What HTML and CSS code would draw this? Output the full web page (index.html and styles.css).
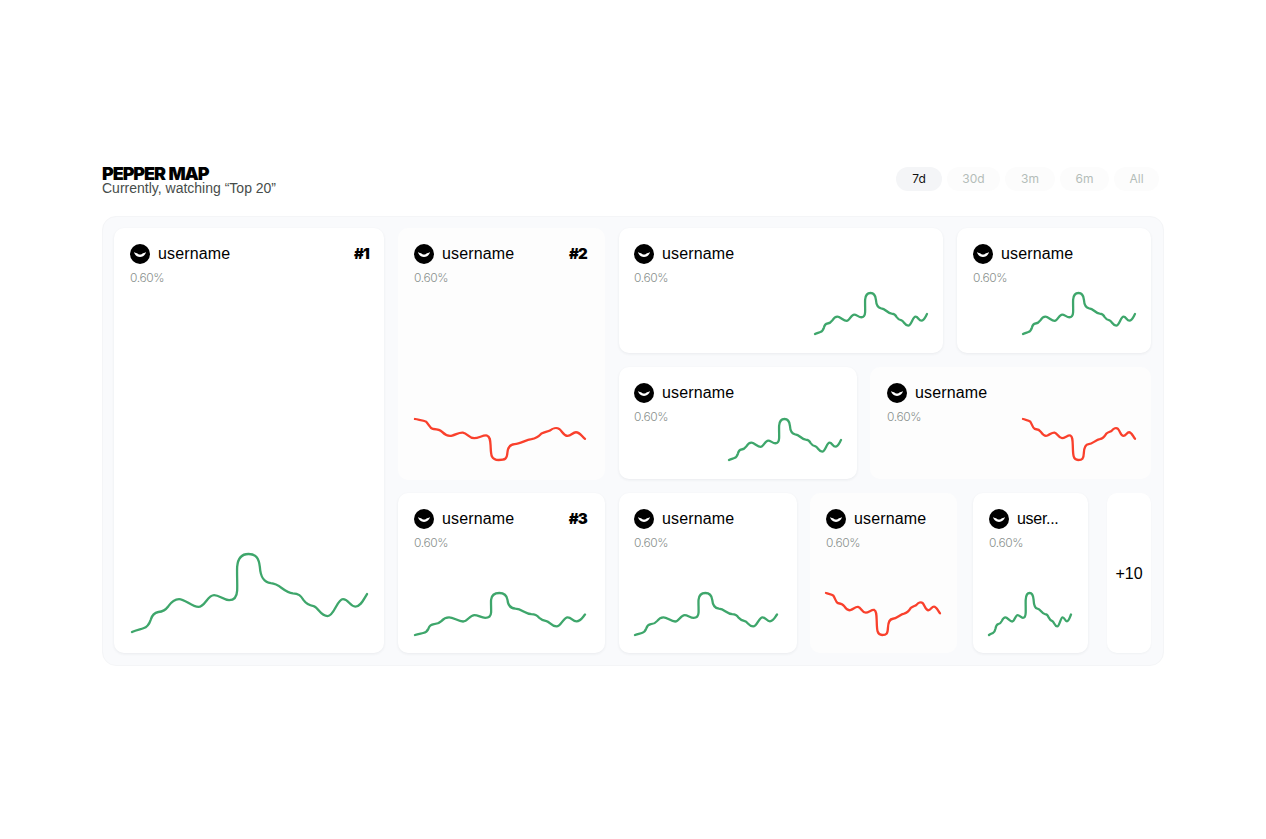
FILE: index.html
```html
<!DOCTYPE html>
<html lang="en">
<head>
  <meta charset="UTF-8">
  <meta name="viewport" content="width=device-width, initial-scale=1.0">
  <title>Pepper Map</title>
  <link rel="stylesheet" href="styles.css">
</head>
<body>
  <!-- shared shapes -->
  <svg class="defs" aria-hidden="true">
    <symbol id="avatar" viewBox="0 0 20 20">
      <circle cx="10" cy="10" r="10" fill="#000"/>
      <path d="M4 8C4.6 11 7 12.9 10 12.9C13 12.9 15.4 11 16 8C14.4 9 13.2 9.4 12.4 9.5C11.8 10.8 8.2 10.8 7.6 9.5C6.8 9.4 5.6 9 4 8Z" fill="#fff"/>
    </symbol>
    <symbol id="line-up" viewBox="66 72 704 230" preserveAspectRatio="none">
      <path class="line line-green" d="M66 302C78 296 92 294 100 291C112 287 118 278 122 266C126 252 133 245 145 243C158 242 166 238 175 226C184 213 195 205 207 205C225 205 245 228 265 228C285 228 292 193 312 193C328 193 340 208 357 208C372 208 380 200 381 180C382 160 380 130 381 110C383 85 395 72 415 72C438 72 446 85 449 110C451 140 460 155 482 158C510 160 520 185 548 188C565 188 572 195 580 208C590 222 600 224 610 226C625 230 630 255 652 255C672 255 680 205 698 205C715 205 718 227 735 227C752 227 760 205 770 190"/>
    </symbol>
    <symbol id="line-down" viewBox="47 57 508 124" preserveAspectRatio="none">
      <path class="line line-red" d="M47 57C60 60 72 60 80 65C88 72 90 84 100 87C112 88 120 88 128 96C138 106 148 110 158 107C170 104 178 97 190 98C204 100 208 115 224 115C238 115 250 105 262 107C272 110 272 122 273 140C274 165 274 181 297 181C316 181 322 178 323 160C324 142 330 134 345 133C362 132 378 120 395 118C408 116 415 112 425 101C435 96 445 95 450 92C458 85 470 82 478 87C488 94 490 108 503 108C514 108 518 97 528 97C540 97 546 110 555 117"/>
    </symbol>
  </svg>

  <main class="page">
    <header class="top">
      <div>
        <h1 class="title">PEPPER MAP</h1>
        <p class="subtitle">Currently, watching “Top 20”</p>
      </div>
      <nav class="tabs">
        <span class="tab tab-active">7d</span>
        <span class="tab tab-30">30d</span>
        <span class="tab tab-3m">3m</span>
        <span class="tab tab-6m">6m</span>
        <span class="tab tab-all">All</span>
      </nav>
    </header>

    <section class="panel">
      <article class="card card-first">
        <div class="card-head">
          <svg class="avatar"><use href="#avatar"/></svg>
          <span class="name">username</span>
          <span class="rank">#1</span>
        </div>
        <p class="pct">0.60%</p>
        <svg class="chart chart-xl"><use href="#line-up" width="100%" height="100%"/></svg>
      </article>

      <div class="main">
        <div class="upper">
          <article class="card card-faded card-second">
            <div class="card-head">
              <svg class="avatar"><use href="#avatar"/></svg>
              <span class="name">username</span>
              <span class="rank rank-inset">#2</span>
            </div>
            <p class="pct">0.60%</p>
            <svg class="chart chart-wide chart-high"><use href="#line-down" width="100%" height="100%"/></svg>
          </article>

          <div class="stack">
            <div class="row row-top">
              <article class="card w-324">
                <div class="card-head">
                  <svg class="avatar"><use href="#avatar"/></svg>
                  <span class="name">username</span>
                </div>
                <p class="pct">0.60%</p>
                <svg class="chart chart-sm"><use href="#line-up" width="100%" height="100%"/></svg>
              </article>
              <article class="card w-194">
                <div class="card-head">
                  <svg class="avatar"><use href="#avatar"/></svg>
                  <span class="name">username</span>
                </div>
                <p class="pct">0.60%</p>
                <svg class="chart chart-sm"><use href="#line-up" width="100%" height="100%"/></svg>
              </article>
            </div>
            <div class="row row-mid">
              <article class="card w-238">
                <div class="card-head">
                  <svg class="avatar"><use href="#avatar"/></svg>
                  <span class="name">username</span>
                </div>
                <p class="pct">0.60%</p>
                <svg class="chart chart-sm chart-tuck"><use href="#line-up" width="100%" height="100%"/></svg>
              </article>
              <article class="card card-faded w-281">
                <div class="card-head">
                  <svg class="avatar"><use href="#avatar"/></svg>
                  <span class="name">username</span>
                </div>
                <p class="pct">0.60%</p>
                <svg class="chart chart-sm chart-tuck"><use href="#line-down" width="100%" height="100%"/></svg>
              </article>
            </div>
          </div>
        </div>

        <div class="lower">
          <article class="card w-207 card-gap">
            <div class="card-head">
              <svg class="avatar"><use href="#avatar"/></svg>
              <span class="name">username</span>
              <span class="rank rank-inset">#3</span>
            </div>
            <p class="pct">0.60%</p>
            <svg class="chart chart-wide"><use href="#line-up" width="100%" height="100%"/></svg>
          </article>
          <article class="card w-178">
            <div class="card-head">
              <svg class="avatar"><use href="#avatar"/></svg>
              <span class="name">username</span>
            </div>
            <p class="pct">0.60%</p>
            <svg class="chart chart-md"><use href="#line-up" width="100%" height="100%"/></svg>
          </article>
          <article class="card card-faded w-147">
            <div class="card-head">
              <svg class="avatar"><use href="#avatar"/></svg>
              <span class="name">username</span>
            </div>
            <p class="pct">0.60%</p>
            <svg class="chart chart-nudge"><use href="#line-down" width="100%" height="100%"/></svg>
          </article>
          <article class="card w-115">
            <div class="card-head">
              <svg class="avatar"><use href="#avatar"/></svg>
              <span class="name name-short">user...</span>
            </div>
            <p class="pct">0.60%</p>
            <svg class="chart chart-xs"><use href="#line-up" width="100%" height="100%"/></svg>
          </article>
          <article class="card card-more">+10</article>
        </div>
      </div>
    </section>
  </main>
</body>
</html>
```

FILE: styles.css
```css
* {
  box-sizing: border-box;
}
body {
  margin: 0;
  background: #fff;
  color: #000;
  font-family: "Liberation Sans", Arial, sans-serif;
}
.defs {
  display: none;
}
.page {
  width: 1062px;
  margin-left: 102px;
  padding-top: 164px;
}

/* header */
.top {
  display: flex;
  justify-content: space-between;
  align-items: flex-start;
  height: 52px;
  padding-right: 5px;
}
.title {
  margin: 0;
  padding-top: 2px;
  font-family: Inter, "Liberation Sans", sans-serif;
  font-size: 18px;
  line-height: 16px;
  font-weight: 900;
  letter-spacing: -1.1px;
  word-spacing: 1px;
}
.subtitle {
  margin: 0;
  font-size: 14px;
  line-height: 13px;
  color: #474d4b;
}
.tabs {
  display: flex;
  gap: 5px;
  padding-top: 3px;
}
.tab {
  height: 24px;
  width: 49px;
  border-radius: 12px;
  background: #fcfcfc;
  color: #b4bdb9;
  font-family: Inter, "Liberation Sans", sans-serif;
  font-size: 12px;
  line-height: 24px;
  text-align: center;
}
.tab-active {
  width: 46px;
  background: #f4f5f7;
  color: #111;
}
.tab-30 {
  width: 53px;
}
.tab-3m {
  width: 50px;
}
.tab-all {
  width: 45px;
}

/* treemap */
.panel {
  display: flex;
  align-items: flex-start;
  gap: 14px;
  height: 450px;
  padding: 11px;
  border: 1px solid #f4f5f7;
  border-radius: 14px;
  background: #f9fafc;
}
.main {
  display: flex;
  flex-direction: column;
  gap: 13px;
  width: 753px;
}
.upper {
  display: flex;
  gap: 14px;
  height: 252px;
}
.stack {
  display: flex;
  flex-direction: column;
  gap: 14px;
  width: 532px;
}
.row {
  display: flex;
  justify-content: space-between;
}
.row-top {
  height: 125px;
}
.row-mid {
  height: 112px;
}
.lower {
  display: flex;
  gap: 13px;
  height: 160px;
}

.card {
  display: flex;
  flex-direction: column;
  padding: 16px 16px 18px;
  border-radius: 10px;
  background: #fff;
  box-shadow: 0 1px 3px rgba(30, 40, 60, 0.07);
}
.card-faded {
  background: #fdfdfd;
  box-shadow: none;
}
.card-first {
  width: 270px;
  height: 425px;
}
.card-second {
  width: 207px;
}
.card-gap {
  margin-right: 1px;
}
.w-324 {
  width: 324px;
  padding-left: 15px;
}
.w-194 { width: 194px; }
.w-238 {
  width: 238px;
  padding-left: 15px;
}
.w-281 {
  width: 281px;
  padding-left: 17px;
}
.w-207 { width: 207px; }
.w-178 {
  width: 178px;
  padding-left: 15px;
}
.w-147 { width: 147px; }
.w-115 {
  width: 115px;
  margin-left: 3px;
}
.card-more {
  width: 44px;
  margin-left: 6px;
  padding: 2px 0 0;
  align-items: center;
  justify-content: center;
  font-size: 16px;
  box-shadow: 0 1px 2px rgba(30, 40, 60, 0.04);
}

.card-head {
  display: flex;
  align-items: center;
  gap: 8px;
  height: 20px;
}
.avatar {
  flex: none;
  width: 20px;
  height: 20px;
}
.name {
  font-size: 16px;
  line-height: 20px;
  letter-spacing: 0.15px;
  white-space: nowrap;
}
.name-short {
  letter-spacing: -0.3px;
}
.rank {
  margin: 0 -1px 2px auto;
  font-family: Inter, "Liberation Sans", sans-serif;
  font-size: 15px;
  font-weight: 900;
  letter-spacing: -0.8px;
}
.rank-inset {
  margin-right: 2px;
}
.pct {
  margin: 6px 0 0;
  font-family: Inter, "Liberation Sans", sans-serif;
  font-size: 12px;
  font-weight: 300;
  line-height: 16px;
  letter-spacing: -0.4px;
  color: #8a918e;
}

/* sparklines */
.chart {
  flex: none;
  display: block;
  align-self: flex-end;
  margin-top: auto;
  overflow: visible;
}
symbol {
  overflow: visible;
}
.chart-xl {
  width: 235px;
  height: 78px;
  margin: auto 1px 3px 0;
}
.chart-wide {
  width: 170px;
  height: 42px;
  margin-right: 4px;
}
.chart-high {
  margin-bottom: 2px;
  height: 41px;
}
.chart-md {
  width: 142px;
  height: 42px;
  margin-right: 4px;
}
.chart-sm {
  width: 112px;
  height: 41px;
  margin-bottom: 1px;
}
.chart-tuck {
  margin-top: -6px;
}
.chart-nudge {
  width: 114px;
  height: 42px;
  margin-right: 1px;
}
.chart-xs {
  width: 82px;
  height: 42px;
  margin-right: 1px;
}
.line {
  fill: none;
  stroke-width: 2.3px;
  stroke-linecap: round;
  vector-effect: non-scaling-stroke;
}
.chart-xl .line {
  stroke-width: 3.6px;
}
.line-green {
  stroke: #3ea66b;
}
.line-red {
  stroke: #f9402c;
}
```
